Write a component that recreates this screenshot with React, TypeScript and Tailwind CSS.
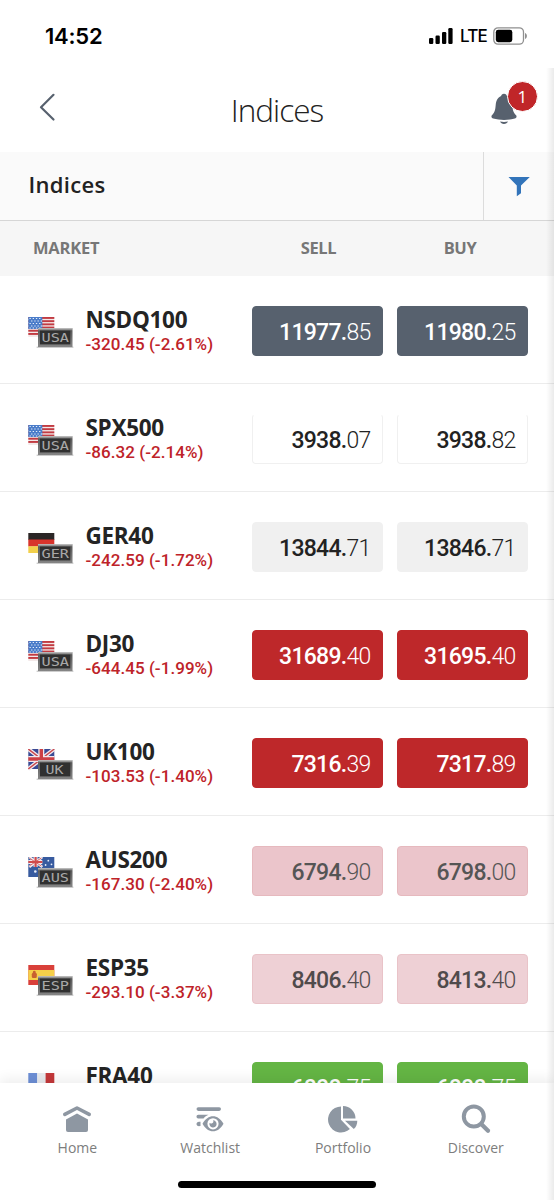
import type { ReactNode } from 'react';
import clsx from 'clsx';

type Tone = 'slate' | 'blank' | 'gray' | 'red' | 'rose' | 'pink' | 'green';
type Country = 'USA' | 'GER' | 'UK' | 'AUS' | 'ESP' | 'FRA';

interface Market {
  name: string;
  country: Country;
  change: string;
  sell: string;
  buy: string;
  tone: Tone;
}

const markets: Market[] = [
  { name: 'NSDQ100', country: 'USA', change: '-320.45 (-2.61%)', sell: '11977.85', buy: '11980.25', tone: 'slate' },
  { name: 'SPX500', country: 'USA', change: '-86.32 (-2.14%)', sell: '3938.07', buy: '3938.82', tone: 'blank' },
  { name: 'GER40', country: 'GER', change: '-242.59 (-1.72%)', sell: '13844.71', buy: '13846.71', tone: 'gray' },
  { name: 'DJ30', country: 'USA', change: '-644.45 (-1.99%)', sell: '31689.40', buy: '31695.40', tone: 'red' },
  { name: 'UK100', country: 'UK', change: '-103.53 (-1.40%)', sell: '7316.39', buy: '7317.89', tone: 'red' },
  { name: 'AUS200', country: 'AUS', change: '-167.30 (-2.40%)', sell: '6794.90', buy: '6798.00', tone: 'rose' },
  { name: 'ESP35', country: 'ESP', change: '-293.10 (-3.37%)', sell: '8406.40', buy: '8413.40', tone: 'pink' },
  { name: 'FRA40', country: 'FRA', change: '', sell: '6000.75', buy: '6000.75', tone: 'green' },
];

const tones: Record<Tone, string> = {
  slate: 'bg-[#57616e] border-[#57616e] text-white',
  blank: 'bg-white border-[#f0f0f0] border-t-white text-[#222]',
  gray: 'bg-[#f0f0f0] border-[#f0f0f0] text-[#222]',
  red: 'bg-[#be282a] border-[#be282a] text-white',
  rose: 'bg-[#ebc5cb] border-[#e6b9be] text-[#555]',
  pink: 'bg-[#eed0d5] border-[#e9c3c8] text-[#504b4c]',
  green: 'bg-[#64b544] border-[#64b544] text-white',
};

function Flag({ country }: { country: Country }) {
  switch (country) {
    case 'USA':
      return (
        <g>
          <rect width="26" height="20" fill="#f3e9e9" />
          {[0, 3.2, 6.4, 9.6, 12.8, 16].map((y) => (
            <rect key={y} y={y} width="26" height="1.9" fill="#c23b42" />
          ))}
          <rect width="14" height="12" fill="#4a7cc9" />
          {[1.5, 4, 6.5, 9, 11].map((y, i) => (
            <path key={y} d={i % 2 ? 'M2.8 0H14' : 'M1.2 0H14'} transform={`translate(0 ${y})`} stroke="#e6effa" strokeWidth="1.2" strokeDasharray="1.3 1.9" />
          ))}
        </g>
      );
    case 'GER':
      return (
        <g>
          <rect width="26" height="7" fill="#2b2726" />
          <rect y="6.5" width="26" height="7" fill="#d8342c" />
          <rect y="13.3" width="26" height="6.7" fill="#f2d04c" />
        </g>
      );
    case 'UK':
      return (
        <g>
          <rect width="26" height="20" fill="#3a4a94" />
          <path d="M0 0L26 20M26 0L0 20" stroke="#f1e9ee" strokeWidth="4" />
          <path d="M0 0L26 20M26 0L0 20" stroke="#c9474c" strokeWidth="1.4" />
          <path d="M13 0V20M0 10H26" stroke="#f1e9ee" strokeWidth="6" />
          <path d="M13 0V20M0 10H26" stroke="#cc4045" strokeWidth="3.4" />
        </g>
      );
    case 'AUS':
      return (
        <g>
          <rect width="26" height="20" fill="#385b9f" />
          <path d="M1 0L14 10M14 0L1 10" stroke="#f1e9ee" strokeWidth="2.6" />
          <path d="M7.3 0V10M0 5H14" stroke="#f1e9ee" strokeWidth="4" />
          <path d="M7.3 0V10M0 5H14" stroke="#d14a4c" strokeWidth="2.2" />
          <path d="M1 1L13 9M13 1L1 9" stroke="#d14a4c" strokeWidth="0.8" />
          <g fill="#e8eef8">
            <circle cx="20" cy="3.7" r="0.9" />
            <circle cx="17.3" cy="8" r="0.9" />
            <circle cx="23.2" cy="7.3" r="0.9" />
            <circle cx="7" cy="14.5" r="1.3" />
          </g>
        </g>
      );
    case 'ESP':
      return (
        <g>
          <rect width="26" height="20" fill="#d9403a" />
          <rect y="5" width="26" height="10" fill="#f5d04a" />
          <rect x="3.5" y="8" width="5" height="5" rx="1.2" fill="#c8612f" />
          <circle cx="6" cy="7.2" r="1.4" fill="#c8612f" />
        </g>
      );
    case 'FRA':
      return (
        <g>
          <rect width="9" height="20" fill="#6d8fd6" />
          <rect x="9" width="8.5" height="20" fill="#e9ebee" />
          <rect x="17.3" width="8.7" height="20" fill="#c4383a" />
        </g>
      );
  }
}

function MarketIcon({ country }: { country: Country }) {
  return (
    <svg className="mt-[41px] ml-7 h-8 w-12 shrink-0" viewBox="0 0 48 32">
      <defs>
        <linearGradient id="frame" x1="0" y1="0" x2="0" y2="1">
          <stop offset="0" stopColor="#9c9c9c" />
          <stop offset="0.15" stopColor="#5c5c5c" />
          <stop offset="1" stopColor="#858585" />
        </linearGradient>
      </defs>
      <g transform="translate(.3 0)">
        <Flag country={country} />
      </g>
      <path d="M9 30.2H45" stroke="#b7b7b7" strokeWidth="1" strokeLinecap="round" />
      <rect x="10" y="11.2" width="34.5" height="18.8" fill="url(#frame)" />
      <rect x="10" y="11.2" width="34.5" height="1.1" fill="#bcbcbc" />
      <rect x="12" y="13.6" width="30.3" height="13.8" fill="#303030" />
      <text
        x={country === 'UK' ? 17.5 : 13.5}
        y="25.2"
        textLength={country === 'UK' ? 18 : 27.5}
        lengthAdjust="spacingAndGlyphs"
        fontFamily="DejaVu Sans Mono, monospace"
        fontSize="13"
        fill="#a8a8a8"
      >
        {country}
      </text>
    </svg>
  );
}

function Price({ value, tone }: { value: string; tone: Tone }) {
  const [whole, cents] = value.split('.');
  return (
    <button
      className={clsx(
        'mt-[29.5px] h-[50px] w-[131px] shrink-0 rounded border pt-[3px] pr-[12px] text-right font-["Roboto",sans-serif] text-[23px] leading-[46px] tracking-[-0.75px]',
        tones[tone],
      )}
    >
      <span className="font-medium">{whole}.</span>
      <span className="font-light">{cents}</span>
    </button>
  );
}

function MarketRow({ market }: { market: Market }) {
  return (
    <div className="flex h-[108px] shrink-0 items-start border-b border-[#ececec]">
      <MarketIcon country={market.country} />
      <div className="ml-[9px] w-[167.4px] shrink-0 pt-[29px] pl-[0.5px] whitespace-nowrap">
        <div className="text-[22.5px] leading-[30px] font-bold tracking-[-0.3px] text-[#242424]">{market.name}</div>
        <div className='-mt-px font-["Roboto",sans-serif] text-[17px] leading-5 font-medium tracking-[0.05px] text-[#be2329]'>{market.change}</div>
      </div>
      <Price value={market.sell} tone={market.tone} />
      <div className="w-3.5 shrink-0" />
      <Price value={market.buy} tone={market.tone} />
    </div>
  );
}

function NavItem({ label, children }: { label: string; children: ReactNode }) {
  return (
    <div className="flex w-[132.8px] flex-col items-center text-[#8e97a2]">
      <svg className="h-8 w-8" viewBox="0 0 32 32" fill="currentColor">
        {children}
      </svg>
      <span className="mt-[3px] text-[14px] leading-5 text-[#7d7d7d]">{label}</span>
    </div>
  );
}

export default function App() {
  return (
    <div className='relative flex h-[1200px] w-[554px] flex-col overflow-hidden bg-white font-["Open_Sans",sans-serif]'>
      <div className="flex h-[68px] shrink-0 items-center justify-between pt-[3px] pr-[27px] pl-[45px]">
        <span className='font-["Inter",sans-serif] text-[22px] leading-7 font-semibold tracking-[-0.2px] text-black'>14:52</span>
        <div className="flex items-center">
          <svg width="26" height="18" viewBox="0 0 26 18" fill="#000">
            <rect x="1" y="11" width="4.3" height="6" rx="1.2" />
            <rect x="7.5" y="8.5" width="4.3" height="8.5" rx="1.2" />
            <rect x="14" y="5" width="4.3" height="12" rx="1.2" />
            <rect x="20.3" y="1" width="4.3" height="16" rx="1.2" />
          </svg>
          <span className='ml-[6px] font-["Inter",sans-serif] text-[17px] leading-6 font-medium tracking-[-0.8px] text-black'>LTE</span>
          <svg className="ml-[6px]" width="34" height="18" viewBox="0 0 34 18">
            <rect x="0.8" y="0.8" width="29.7" height="16.4" rx="4.2" fill="none" stroke="#8f8f8f" strokeWidth="1.3" />
            <rect x="2.8" y="2.8" width="16.5" height="12.4" rx="2.4" fill="#000" />
            <path d="M32 6v6c1.3-.6 1.9-1.7 1.9-3s-.6-2.4-1.9-3z" fill="#8f8f8f" />
          </svg>
        </div>
      </div>

      <header className="flex h-[84px] shrink-0 items-start justify-between pr-[15px] pl-[39px]">
        <svg className="mt-[25px] mr-[8px]" width="18" height="29" viewBox="0 0 18 29" fill="none">
          <path d="M14.500 1.800L2 14.200l12.500 12.300" stroke="#57616e" strokeWidth="2.200" strokeLinecap="round" strokeLinejoin="round" />
        </svg>
        <h1 className="mt-[21px] text-[31.5px] leading-[42px] font-light tracking-[-1px] text-[#222]">Indices</h1>
        <div className="relative mt-[13px] h-[45px] w-[50px]">
          <svg className="absolute top-[12px] left-[1px]" width="28" height="32" viewBox="0 0 28 32">
            <path
              d="M14 .8c-1.800 0-2.700 1-2.900 2.300C7.500 4.700 6.100 8 5.700 12c-.4 4.400-.5 7-4 10.400-.7 1.600.1 2.500 1.500 3.100 6.600 1.900 15 1.900 21.600 0 1.400-.6 2.200-1.500 1.500-3.100-3.500-3.400-3.600-6-4-10.400-.4-4-1.800-7.300-5.400-8.900C16.700 1.800 15.800.8 14 .8z"
              fill="#57616e"
            />
            <path d="M10 28.600c2.600.4 5.400.4 8 0-.7 1.600-2.100 2.500-4 2.500s-3.300-.9-4-2.500z" fill="#57616e" />
          </svg>
          <span className="absolute top-0 left-[18px] flex h-[31px] w-[31px] items-center justify-center rounded-full border border-white bg-[#c02629] pb-px text-[17px] leading-none text-white">
            1
          </span>
        </div>
      </header>

      <div className="flex h-[69px] shrink-0 border-b border-[#d6d6d6] bg-[#fafafa]">
        <h2 className="flex-1 pt-[17px] pl-[28.5px] text-[22px] leading-[30px] font-semibold tracking-[0.3px] text-[#222]">Indices</h2>
        <div className="w-[71px] border-l border-[#dcdcdc]">
          <svg className="mt-[24px] ml-[23px]" width="24" height="22" viewBox="0 0 24 22">
            <path d="M1.500 1h21.300L14 9.600v7.600L9.800 20.300V9.600z" fill="#3274ba" />
          </svg>
        </div>
      </div>

      <div className="flex h-[55px] shrink-0 items-center bg-[#f6f6f6] pb-0.5 text-[16.5px] leading-6 font-bold text-[#777]">
        <span className="w-[252px] pl-[33px] tracking-[-0.2px]">MARKET</span>
        <span className="w-[133px] text-center tracking-[-0.4px]">SELL</span>
        <span className="w-[150px] text-center tracking-[-0.4px]">BUY</span>
      </div>

      <main className="flex h-[807px] shrink-0 flex-col overflow-hidden">
        {markets.map((market) => (
          <MarketRow key={market.name} market={market} />
        ))}
      </main>

      <nav className="relative flex h-[117px] shrink-0 items-start bg-white pt-5 pl-[11px] shadow-[0_-4px_12px_rgba(0,0,0,0.07)]">
        <NavItem label="Home">
          <path d="M3.800 11.400L16 5l12.200 6.400" fill="none" stroke="currentColor" strokeWidth="3.600" strokeLinecap="round" strokeLinejoin="round" />
          <path d="M16 10.500l11 6v10.400a2 2 0 0 1-2 2H7a2 2 0 0 1-2-2V16.500z" />
        </NavItem>
        <NavItem label="Watchlist">
          <rect x="2.500" y="4.200" width="24.500" height="3.700" rx="1.800" />
          <path d="M4.300 11.700h10.200c-2 .9-3.600 2.100-5 3.700H4.300a1.850 1.850 0 0 1 0-3.700zM6.500 18.800v4.200c-2.800.6-4-.6-4-2.100s1.200-2.700 4-2.100z" />
          <path
            fillRule="evenodd"
            d="M8.500 20.800C11.300 15.800 15 13.300 19 13.300s7.700 2.500 10.500 7.500c-2.800 5-6.500 7.500-10.500 7.500s-7.700-2.500-10.500-7.500zM19 15.200a5.600 5.600 0 1 0 0 11.200 5.600 5.600 0 0 0 0-11.200z"
          />
          <path d="M19 17.300c.9 1.400.3 2.900-1.400 3.100-.9.100-1.500 0-2.100-.3a3.600 3.600 0 1 0 3.500-2.800z" />
        </NavItem>
        <NavItem label="Portfolio">
          <path d="M14 3.500v13.300l8.900 9.200A13 13 0 1 1 14 3.500z" />
          <path d="M16 3A12.400 12.400 0 0 1 28.500 15.500H16z" />
          <path d="M18 17.700h12.300c0 3.500-1.300 6.200-3.500 8.400z" />
        </NavItem>
        <NavItem label="Discover">
          <circle cx="13.800" cy="13.500" r="10" fill="none" stroke="currentColor" strokeWidth="4" />
          <path d="M21.500 21.200l6.500 6.500" stroke="currentColor" strokeWidth="4.200" strokeLinecap="round" />
        </NavItem>
        <div className="absolute bottom-[12px] left-[178px] h-[7px] w-[198px] rounded-full bg-black" />
      </nav>

      <div className="pointer-events-none absolute top-[68px] right-0 bottom-0 w-2 bg-linear-to-l from-black/8 to-transparent" />
    </div>
  );
}
